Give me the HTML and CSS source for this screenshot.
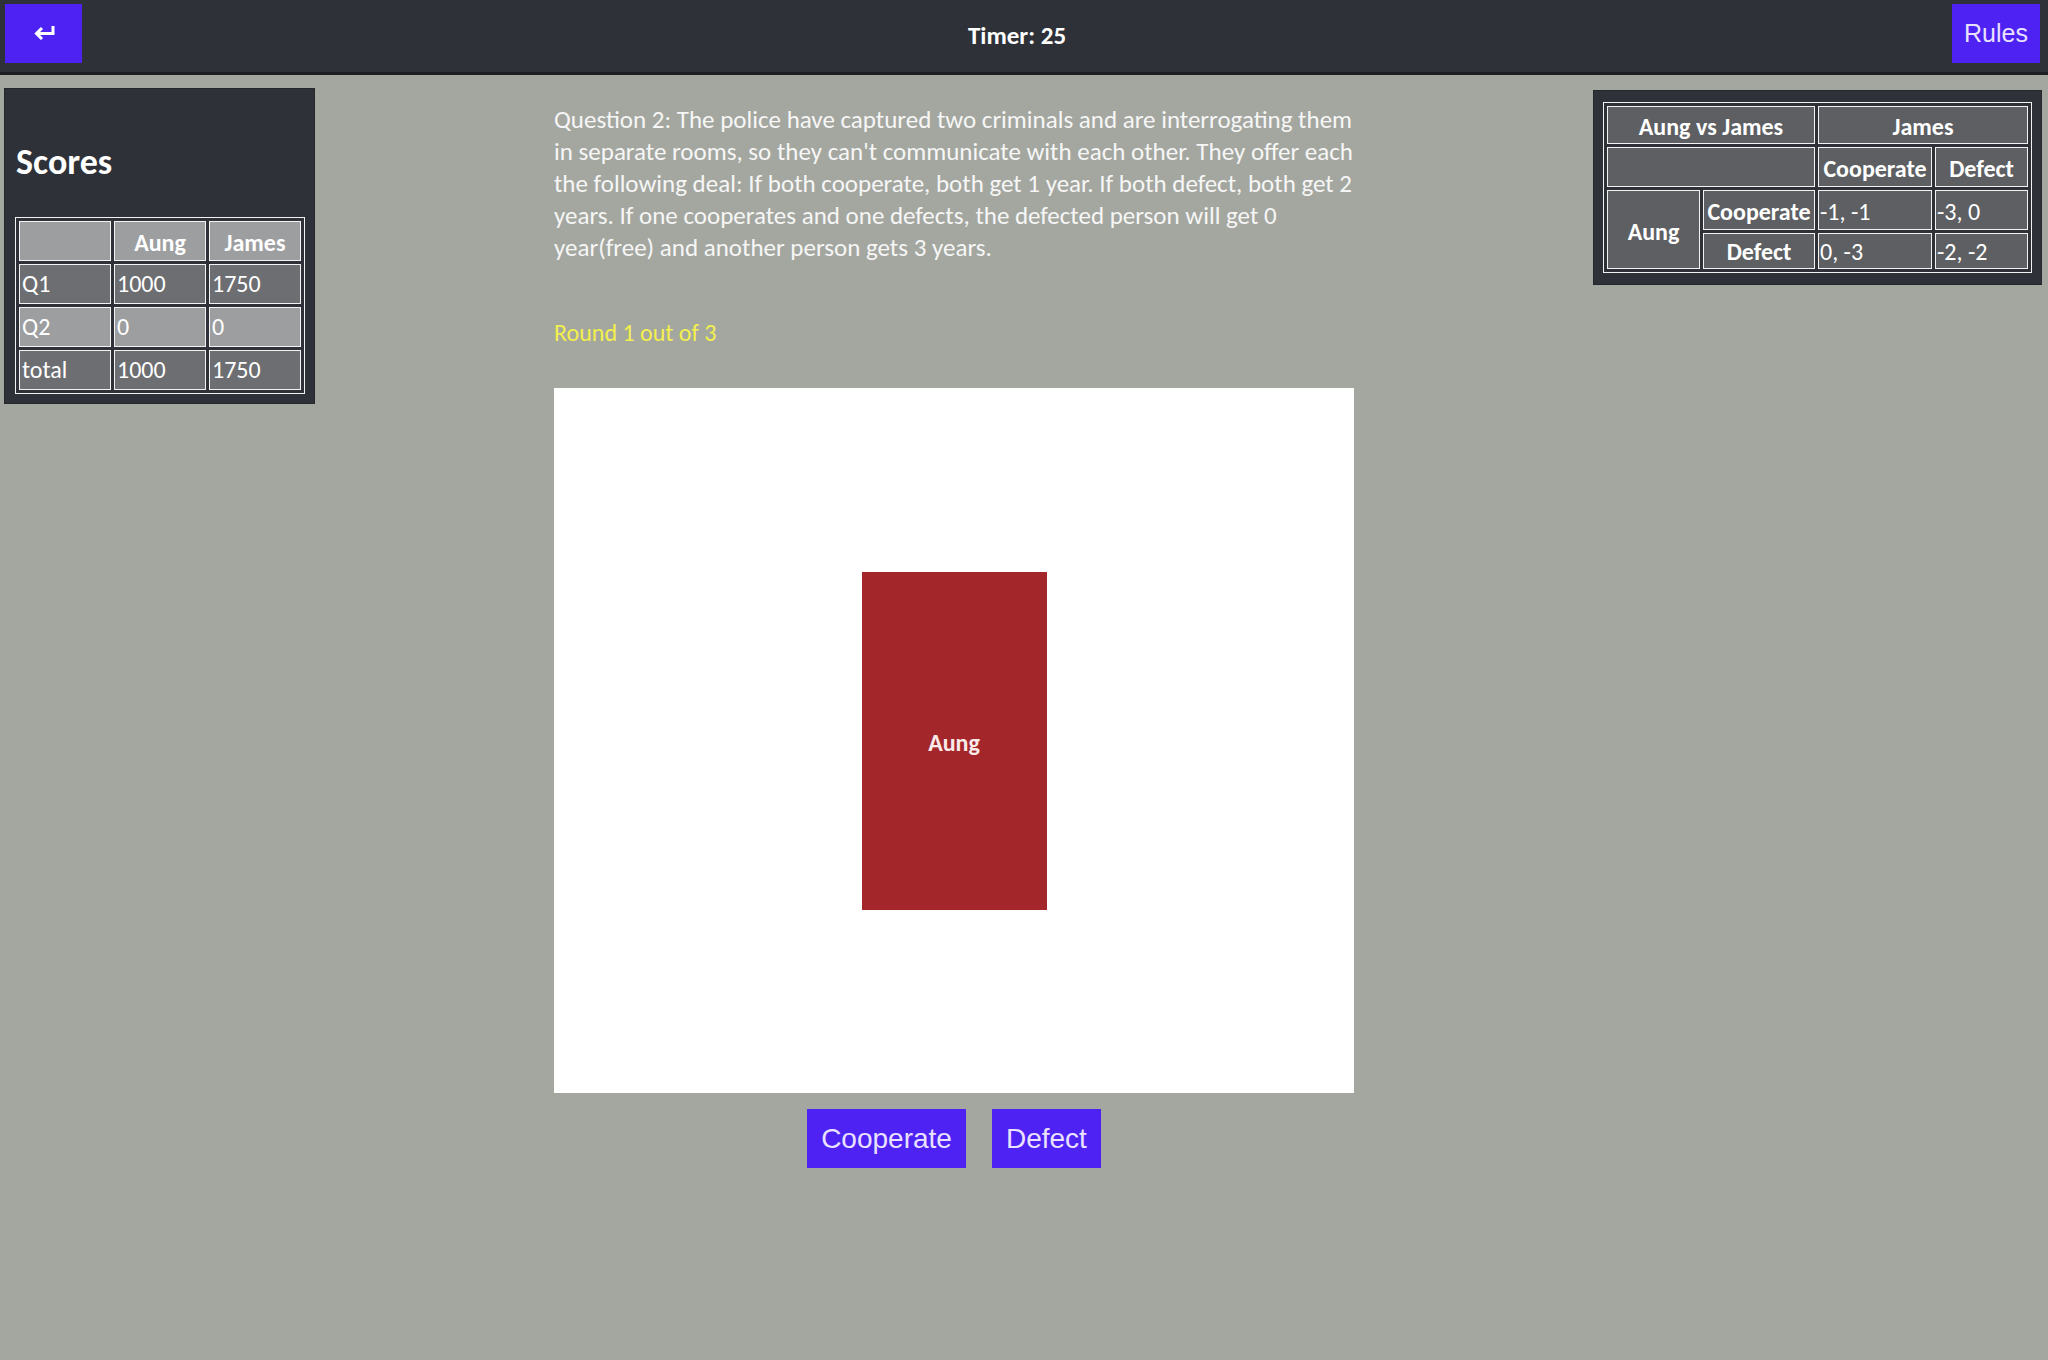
FILE: index.html
```html
<!DOCTYPE html>
<html lang="en">
<head>
<meta charset="utf-8">
<title>Prisoner's Dilemma</title>
<link rel="stylesheet" href="styles.css">
</head>
<body>
<header class="topbar">
  <button class="btn back" aria-label="Back">
    <svg class="back-icon" width="22" height="14" viewBox="0 0 22 14">
      <path d="M20 0 V7.5 H4" fill="none" stroke="#fff" stroke-width="3"/>
      <path d="M9 2 L3.5 7.5 L9 13" fill="none" stroke="#fff" stroke-width="3"/>
    </svg>
  </button>
  <div class="timer">Timer: 25</div>
  <button class="btn rules">Rules</button>
</header>
<main class="main">
  <aside class="panel scores">
    <h2 class="scores-title">Scores</h2>
    <table class="score-table">
      <tr class="row-light"><th></th><th>Aung</th><th>James</th></tr>
      <tr class="row-dark"><td>Q1</td><td>1000</td><td>1750</td></tr>
      <tr class="row-light"><td>Q2</td><td>0</td><td>0</td></tr>
      <tr class="row-dark"><td>total</td><td>1000</td><td>1750</td></tr>
    </table>
  </aside>
  <section class="game">
    <p class="question">Question 2: The police have captured two criminals and are interrogating them in separate rooms, so they can't communicate with each other. They offer each the following deal: If both cooperate, both get 1 year. If both defect, both get 2 years. If one cooperates and one defects, the defected person will get 0 year(free) and another person gets 3 years.</p>
    <p class="round">Round 1 out of 3</p>
    <div class="board">
      <div class="card">Aung</div>
    </div>
    <div class="actions">
      <button class="btn action">Cooperate</button>
      <button class="btn action">Defect</button>
    </div>
  </section>
  <aside class="panel payoff">
    <table class="payoff-table">
      <colgroup>
        <col class="c1"><col class="c2"><col class="c3"><col class="c4">
      </colgroup>
      <tr class="pr1"><th colspan="2">Aung vs James</th><th colspan="2">James</th></tr>
      <tr><th colspan="2"></th><th>Cooperate</th><th>Defect</th></tr>
      <tr><th rowspan="2">Aung</th><th>Cooperate</th><td>-1, -1</td><td>-3, 0</td></tr>
      <tr class="pr4"><th>Defect</th><td>0, -3</td><td>-2, -2</td></tr>
    </table>
  </aside>
</main>
</body>
</html>
```
FILE: styles.css
```css
html, body {
  margin: 0;
  padding: 0;
}

body {
  background: #a4a7a0;
  color: #f7f7f7;
  font-family: Carlito, Calibri, Lato, sans-serif;
  min-height: 1360px;
}

.topbar {
  display: flex;
  justify-content: space-between;
  align-items: flex-start;
  height: 75px;
  box-sizing: border-box;
  padding: 4px 8px 0 5px;
  background: #2e3138;
  border-bottom: 3px solid #1c1e22;
}

.btn {
  background: #4d22f3;
  color: #e9e1ff;
  border: none;
  padding: 0;
  margin: 0;
  font-family: "Century Gothic", "URW Gothic", "Liberation Sans", sans-serif;
  cursor: pointer;
}

.back {
  width: 77px;
  height: 59px;
  display: flex;
  align-items: center;
  justify-content: center;
}

.back-icon {
  display: block;
  margin-top: -2px;
}

.rules {
  width: 88px;
  height: 59px;
  font-size: 25px;
}

.timer {
  font-weight: bold;
  font-size: 25px;
  line-height: 64px;
  color: #fff;
}

.main {
  display: flex;
  justify-content: space-between;
  align-items: flex-start;
  padding: 0 6px 0 4px;
}

.panel {
  background: #2e3138;
  border: 1px solid #24272b;
  box-sizing: border-box;
}

.scores {
  width: 311px;
  margin-top: 13px;
  padding: 0 9px 9px 10px;
}

.scores-title {
  margin: 51px 0 33px 1px;
  font-size: 36px;
  line-height: 44px;
  font-weight: bold;
  color: #fff;
}

.score-table {
  width: 290px;
  border: 1px solid #f2f2f2;
  border-spacing: 3px;
  font-size: 24px;
}

.score-table th,
.score-table td {
  border: 1px solid #f2f2f2;
  padding: 0 2px;
  height: 38px;
  line-height: 38px;
  width: 86px;
  color: #fff;
}

.score-table th {
  text-align: center;
  font-weight: bold;
  padding-top: 4px;
  height: 34px;
  line-height: 34px;
}

.score-table td {
  text-align: left;
}

.row-light th,
.row-light td {
  background: #9d9e9f;
}

.row-dark td {
  background: #6c6e71;
}

.game {
  width: 800px;
  margin-top: 29px;
}

.question {
  margin: 0;
  font-size: 25px;
  line-height: 32px;
  color: #f6f6f6;
}

.round {
  margin: 53px 0 0;
  font-size: 24px;
  line-height: 32px;
  color: #f3f04e;
}

.board {
  margin-top: 39px;
  height: 705px;
  background: #ffffff;
  display: flex;
  align-items: center;
  justify-content: center;
}

.card {
  width: 185px;
  height: 338px;
  background: #a3272a;
  display: flex;
  align-items: center;
  justify-content: center;
  font-weight: bold;
  font-size: 24px;
  color: #fbeaea;
  padding-top: 4px;
  box-sizing: border-box;
}

.actions {
  display: flex;
  justify-content: center;
  gap: 26px;
  margin-top: 16px;
}

.action {
  height: 59px;
  font-size: 28px;
  padding: 0 14px;
}

.payoff {
  width: 449px;
  margin-top: 15px;
  padding: 11px 9px;
}

.payoff-table {
  width: 429px;
  table-layout: fixed;
  border: 1px solid #f2f2f2;
  border-spacing: 3px;
  font-size: 24px;
}

.payoff-table .c1 { width: 93px; }
.payoff-table .c2 { width: 112px; }
.payoff-table .c3 { width: 114px; }
.payoff-table .c4 { width: 93px; }

.payoff-table th,
.payoff-table td {
  border: 1px solid #f2f2f2;
  background: #5d5f63;
  padding: 3px 1px 0;
  height: 35px;
  line-height: 35px;
  color: #fff;
  white-space: nowrap;
  overflow: hidden;
}

.payoff-table .pr1 th {
  height: 33px;
  line-height: 33px;
}

.payoff-table .pr4 th,
.payoff-table .pr4 td {
  height: 32px;
  line-height: 32px;
  padding-top: 2px;
}

.payoff-table th {
  font-weight: bold;
  text-align: center;
}

.payoff-table td {
  text-align: left;
}
```
